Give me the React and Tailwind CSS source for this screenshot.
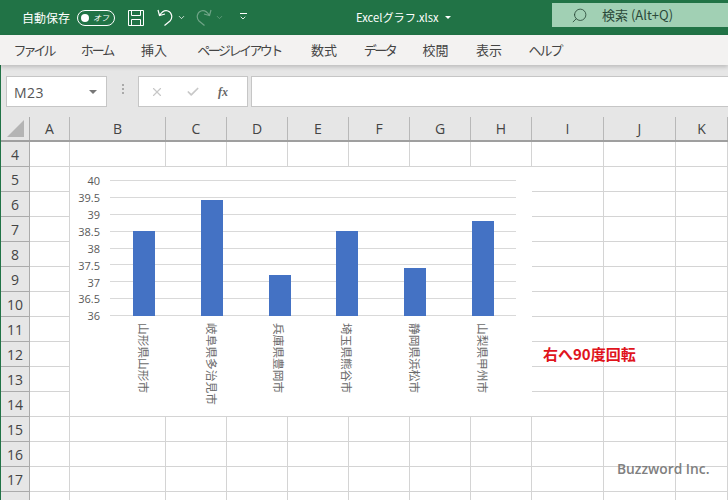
import React from 'react';
import { ChevronDown, Search, X, Check } from 'lucide-react';

const TABS = [
  ['ファイル', 'w-[65px] tracking-[-3px]'],
  ['ホーム', 'w-[62px] tracking-[-2px]'],
  ['挿入', 'w-[52px]'],
  ['ページ レイアウト', 'w-[118px] tracking-[-2.6px]'],
  ['数式', 'w-[52px]'],
  ['データ', 'w-[59px] tracking-[-2.5px]'],
  ['校閲', 'w-[53px]'],
  ['表示', 'w-[54px]'],
  ['ヘルプ', 'w-[58px] tracking-[-2px]'],
];

const COLS = [
  ['A', 'w-[40px]'],
  ['B', 'w-[96px]'],
  ['C', 'w-[61px]'],
  ['D', 'w-[61px]'],
  ['E', 'w-[61px]'],
  ['F', 'w-[61px]'],
  ['G', 'w-[61px]'],
  ['H', 'w-[61px]'],
  ['I', 'w-[72px]'],
  ['J', 'w-[72px]'],
  ['K', 'w-[52px]'],
];

const ROWS = [4, 5, 6, 7, 8, 9, 10, 11, 12, 13, 14, 15, 16, 17, 18];

const DATA = [
  ['山形県山形市', 38.5],
  ['岐阜県多治見市', 39.4],
  ['兵庫県豊岡市', 37.2],
  ['埼玉県熊谷市', 38.5],
  ['静岡県浜松市', 37.4],
  ['山梨県甲州市', 38.8],
];

const TICKS = ['40', '39.5', '39', '38.5', '38', '37.5', '37', '36.5', '36'];

const UNDO = 'M1 1 L2.5 6.5 L8 5 M2.5 6.5 C5 2.5 8 1 11 2 C15 3.5 16 9 13 12 L7.5 16.5';

const TitleBar = () => (
  <div className="h-[35px] bg-[#217346] flex items-center text-white shrink-0">
    <span className="ml-[22px] text-[12px] w-[48px] whitespace-nowrap">自動保存</span>
    <div className="ml-[7px] w-[38px] h-[16px] rounded-full border border-white flex items-center justify-between px-[3px]">
      <span className="w-[8px] h-[8px] rounded-full bg-white" />
      <span className="text-[8px] italic leading-none pr-[2px]">オフ</span>
    </div>
    <svg className="ml-[13px]" width="16" height="16" viewBox="0 0 16 16" fill="none" stroke="white" strokeWidth="1">
      <path d="M.5.5h15v15H.5z" />
      <path d="M3.5.5v5h9v-5M3.5 15.5v-6h9v6" />
    </svg>
    <svg className="ml-[13px]" width="17" height="17" viewBox="0 0 17 17" fill="none" stroke="white" strokeWidth="1.2">
      <path d={UNDO} />
    </svg>
    <ChevronDown className="ml-[3px]" size={9} strokeWidth={2} />
    <svg className="ml-[9px] opacity-35 -scale-x-100" width="17" height="17" viewBox="0 0 17 17" fill="none" stroke="white" strokeWidth="1.2">
      <path d={UNDO} />
    </svg>
    <ChevronDown className="ml-[3px] opacity-35" size={9} strokeWidth={2} />
    <div className="ml-[15px] w-[8px] flex flex-col items-center gap-[2px]">
      <span className="w-[7px] h-px bg-white" />
      <ChevronDown size={8} strokeWidth={2.5} className="-mt-[2px]" />
    </div>
    <span className="ml-[109px] w-[89px] text-[11.2px] whitespace-nowrap">Excelグラフ.xlsx</span>
    <span className="w-0 h-0 border-x-[3px] border-x-transparent border-t-[3px] border-t-white" />
    <div className="ml-auto w-[176px] h-[24px] -mt-[5px] bg-[#a1d0b4] flex items-center text-[#2b4a3a]">
      <Search className="ml-[19px] -scale-x-100" size={17} strokeWidth={1.2} />
      <span className="ml-[14px] text-[13px] whitespace-nowrap">検索 (Alt+Q)</span>
    </div>
  </div>
);

const Ribbon = () => (
  <div className="h-[30px] bg-[#f3f2f1] flex items-center pl-[1px] shrink-0 shadow-[0_2px_4px_rgba(0,0,0,0.18)] relative">
    {TABS.map(([label, w]) => (
      <span key={label} className={`${w} text-center text-[13px] text-[#444] whitespace-nowrap`}>
        {label}
      </span>
    ))}
  </div>
);

const FormulaBar = () => (
  <div className="h-[52px] bg-[#e6e6e6] flex items-start pt-[11px] pl-[5px] shrink-0 border-l border-[#217346]">
    <div className="w-[101px] h-[31px] bg-white border border-[#c6c6c6] flex items-center justify-between pl-[7px] pr-[9px]">
      <span className="pt-[1px] text-[14px] text-[#555] tracking-[0.5px] [font-family:'Open_Sans',sans-serif]">M23</span>
      <span className="w-0 h-0 border-x-[4px] border-x-transparent border-t-[4px] border-t-[#777]" />
    </div>
    <div className="ml-[15px] mt-[8px] w-[2px] flex flex-col gap-[2px]">
      <span className="h-[2px] bg-[#aaa]" />
      <span className="h-[2px] bg-[#aaa]" />
      <span className="h-[2px] bg-[#aaa]" />
    </div>
    <div className="ml-[14px] w-[110px] h-[31px] bg-white border border-[#c6c6c6] flex items-center">
      <X className="ml-[11px] text-[#c8c8c8]" size={14} strokeWidth={2} />
      <Check className="ml-[22px] text-[#c8c8c8]" size={14} strokeWidth={3} />
      <span className="ml-[18px] text-[12px] italic font-bold text-[#666] [font-family:'Liberation_Serif',serif]">fx</span>
    </div>
    <div className="ml-[3px] flex-1 h-[31px] bg-white border border-[#c6c6c6] border-r-0" />
  </div>
);

const Chart = () => (
  <div className="absolute left-[69px] top-[50px] w-[462px] h-[249px] bg-white">
    <div className="absolute left-0 top-[13px] w-[447px] h-[136px] flex flex-col justify-between">
      {TICKS.map((t) => (
        <div key={t} className="h-px flex items-center">
          <span className="w-[30px] mt-[2px] text-right text-[11px] text-[#595959] [font-family:'Open_Sans',sans-serif]">{t}</span>
          <span className="ml-[10px] w-[406px] h-px bg-[#d9d9d9]" />
        </div>
      ))}
    </div>
    <div className="absolute left-[40px] top-[13px] w-[407px] h-[136px] flex">
      {DATA.map(([name, v]) => (
        <div key={name} className="flex-1 flex flex-col items-center justify-end">
          <div className="w-[22px] bg-[#4472c4]" style={{ height: (v - 36) * 34 }} />
        </div>
      ))}
    </div>
    <div className="absolute left-[40px] top-[156px] w-[407px] flex">
      {DATA.map(([name]) => (
        <div key={name} className="flex-1 flex justify-center">
          <span className="[writing-mode:vertical-rl] [text-orientation:sideways] text-[11.7px] leading-none text-[#6b6b6b] whitespace-nowrap">
            {name}
          </span>
        </div>
      ))}
    </div>
  </div>
);

const Sheet = () => (
  <div className="relative flex-1 overflow-hidden border-l border-[#217346] bg-white">
    <div className="flex h-[25px] bg-[#e6e6e6] border-b-2 border-[#9f9f9f]">
      <div className="w-[29px] border-r border-[#ababab] flex items-center justify-center">
        <span className="w-0 h-0 ml-[1px] border-l-[17px] border-l-transparent border-b-[17px] border-b-[#b4b4b4]" />
      </div>
      {COLS.map(([c, w]) => (
        <div key={c} className={`${w} shrink-0 border-r border-[#b8b8b8] flex items-center justify-center text-[14px] text-[#444] [font-family:'Open_Sans',sans-serif]`}>
          {c}
        </div>
      ))}
    </div>
    {ROWS.map((r) => (
      <div key={r} className="flex h-[25px]">
        <div className="w-[29px] shrink-0 bg-[#e6e6e6] border-r border-b border-[#ababab] flex items-center justify-center text-[14px] text-[#444] [font-family:'Open_Sans',sans-serif]">
          {r}
        </div>
        {COLS.map(([c, w]) => (
          <div key={c} className={`${w} shrink-0 border-r border-b border-[#d4d4d4] flex items-center`}>
            {r === 12 && c === 'I' && (
              <span className="ml-[11px] text-[15px] font-bold text-[#e0141c] whitespace-nowrap">右へ90度回転</span>
            )}
          </div>
        ))}
      </div>
    ))}
    <Chart />
    <span className="absolute left-[616px] top-[342px] text-[13.8px] font-semibold text-[#808080] [font-family:'Open_Sans',sans-serif] whitespace-nowrap">
      Buzzword Inc.
    </span>
  </div>
);

export default function App() {
  return (
    <div className="w-[728px] h-[500px] overflow-hidden flex flex-col bg-white [font-family:'Noto_Sans_CJK_JP','Noto_Sans',sans-serif]">
      <TitleBar />
      <Ribbon />
      <FormulaBar />
      <Sheet />
    </div>
  );
}
